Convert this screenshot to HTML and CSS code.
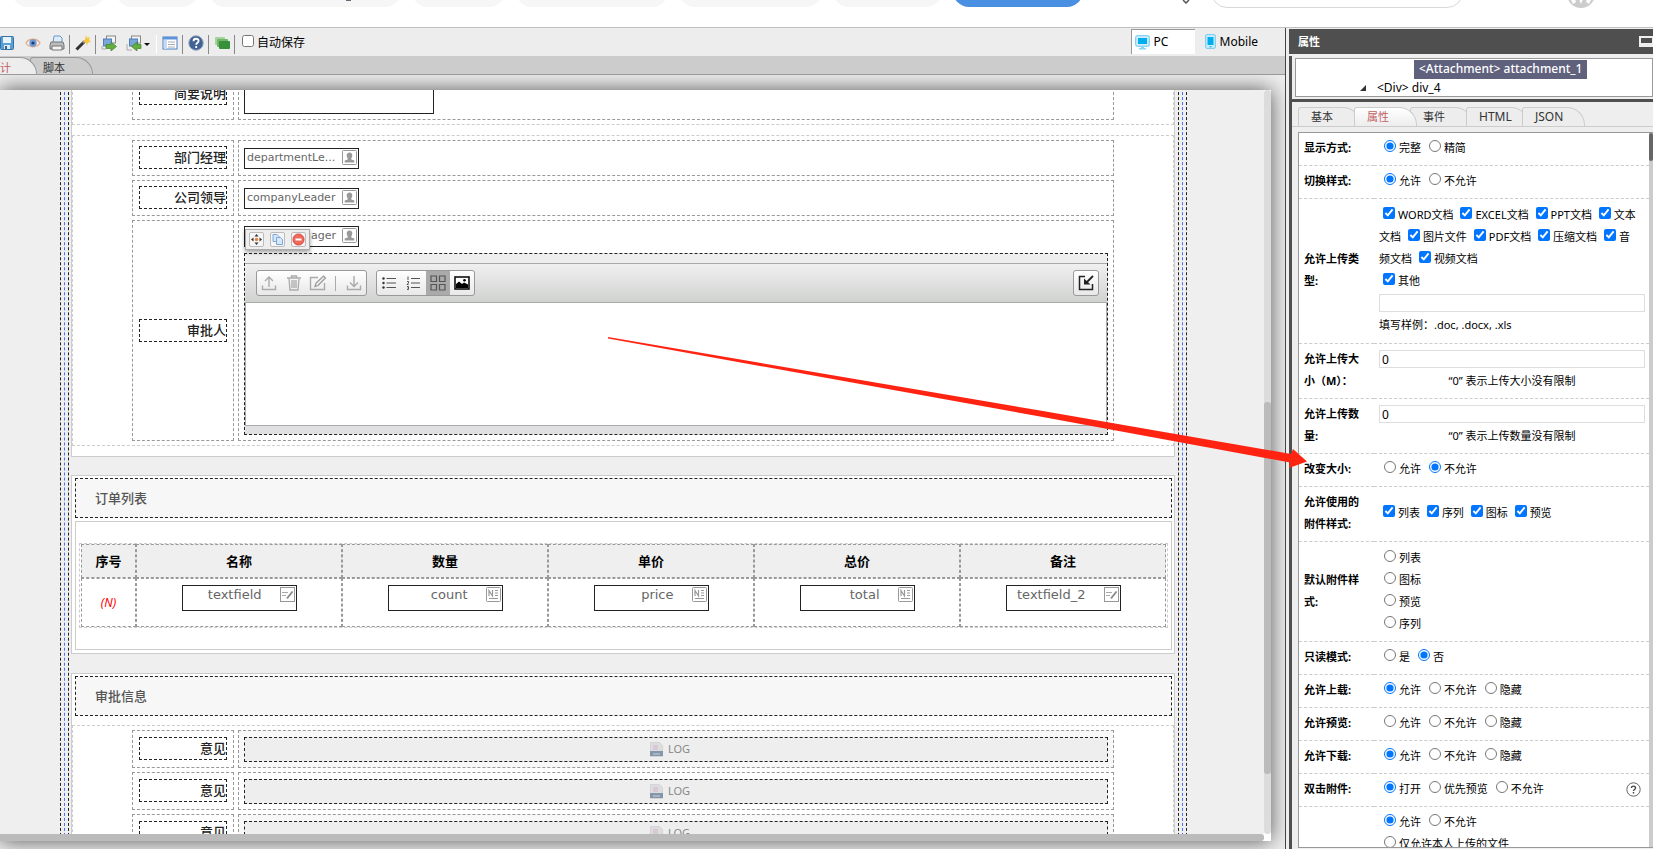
FILE: index.html
```html
<!DOCTYPE html>
<html lang="zh-CN">
<head>
<meta charset="UTF-8" />
<meta name="viewport" content="width=device-width, initial-scale=1" />
<title>表单设计</title>
<link rel="stylesheet" href="styles.css">
</head>
<body>

<!-- Shared icons -->
<svg class="sprite" aria-hidden="true">
  <symbol id="i-person" viewBox="0 0 15 15">
    <rect x=".5" y=".5" width="14" height="14" rx="1" fill="#fff" stroke="#999"/>
    <path d="M7.5 2.5c2 0 3 1.300 2.800 3.200-.1 1.300-.6 2-1 2.500v1.300l3 1v2H2.700v-2l3-1V8.200c-.4-.5-.9-1.200-1-2.500C4.500 3.800 5.500 2.500 7.500 2.500z" fill="#999"/>
  </symbol>
  <symbol id="i-text" viewBox="0 0 15 15">
    <rect x=".5" y=".5" width="14" height="14" fill="#fff" stroke="#999"/>
    <path d="M2 5.500h6M2 8.500h4" stroke="#aaa"/>
    <path d="M7 11.500l5.500-7" stroke="#888" stroke-width="1.800"/>
  </symbol>
  <symbol id="i-num" viewBox="0 0 15 15">
    <rect x=".5" y=".5" width="14" height="14" rx="1" fill="#fff" stroke="#999"/>
    <path d="M3 9V3.500L6.500 9V3M9 3.500h3M9 6h3M9 8.500h3M3 11.500h9" fill="none" stroke="#999" stroke-width="1.200"/>
  </symbol>
  <symbol id="i-log" viewBox="0 0 13 15">
    <path d="M.5.500h9l3 3V14.500H.5z" fill="#ddd" stroke="#d4d4d8"/>
    <path d="M3 3h5v5H3z" fill="#d9c9d6"/>
    <path d="M0 9h13v5H0z" fill="#8496a9"/>
    <path d="M3 12h7" stroke="#c9d3dc"/>
  </symbol>
</svg>

<header class="top">
  <nav class="pills">
    <span class="pill w93"></span><span class="pill w82"></span><span class="pill w192 tail"></span><span class="pill w93"></span><span class="pill w152"></span><span class="pill w143"></span><span class="pill w109"></span><span class="pill w130 on"></span>
  </nav>
  <svg class="chev" width="8" height="4"><path d="M1 0l3 3 3-3" fill="none" stroke="#555" stroke-width="1.500"/></svg>
  <input class="search" type="text" aria-label="搜索">
  <svg class="avatar" width="28" height="28" viewBox="0 0 28 28"><circle cx="14" cy="14" r="14" fill="#ccc"/><path d="M4 20l4-1 1 3-3 2zM24 20l-4-1-1 3 3 2zM12 19h4l-2 5z" fill="#fff"/></svg>
</header>

<div class="main">
  <section class="designer">
    <div class="toolbar">
      <button class="tool save" aria-label="保存"><svg width="15" height="16" viewBox="0 0 15 16"><rect x=".5" y="1.500" width="13" height="13" rx="1" fill="#5a9fd4" stroke="#3572a5"/><path d="M3 2h8v6H3z" fill="#e8f4fc"/><path d="M4 10h6v4H4z" fill="#e5eaf0"/><path d="M5 11h2v3H5z" fill="#2d6594"/></svg></button>
      <button class="tool" aria-label="预览"><svg width="16" height="16" viewBox="0 0 16 16"><path d="M1 8c3-5 11-5 14 0-3 5-11 5-14 0z" fill="#f4f6fa" stroke="#e2ab85" stroke-width="1.400"/><circle cx="8" cy="8" r="3.700" fill="#6c9ad6"/><circle cx="8" cy="8" r="1.600" fill="#223c6a"/></svg></button>
      <button class="tool" aria-label="打印"><svg width="16" height="16" viewBox="0 0 16 16"><path d="M5 1h6l2 2v5H4z" fill="#dcecfb" stroke="#6d97c3"/><path d="M2 7h12l1 3v4H1v-4z" fill="#bbb" stroke="#777"/><path d="M3 11h10v4H3z" fill="#f3f3f3" stroke="#777"/></svg></button>
      <span class="sep"></span>
      <button class="tool" aria-label="向导"><svg width="16" height="16" viewBox="0 0 16 16"><path d="M1.500 14.500L9 7" stroke="#333" stroke-width="3"/><path d="M8 8l2-2" stroke="#888" stroke-width="3"/><path d="M11 0l1 3 3-1-1 3 2 2-3 .5-1 3-1-3-3-1 2-2z" fill="#f8c63c"/></svg></button>
      <span class="sep"></span>
      <button class="tool" aria-label="导出"><svg width="16" height="16" viewBox="0 0 16 16"><rect x="5.500" y="1" width="9" height="7" fill="#f4f4f4" stroke="#888"/><rect x="2.500" y="4" width="8" height="7" fill="#79a7dc" stroke="#4f7fb8"/><path d="M1 11v3h4" fill="none" stroke="#aaa"/><path d="M5 9.500h5V7l5.500 4.500L10 16v-2.500H5z" fill="#63ae3e" stroke="#40842a" stroke-width=".7"/></svg></button>
      <button class="tool wide" aria-label="导入"><svg width="25" height="16" viewBox="0 0 25 16"><rect x="5.500" y="1" width="9" height="7" fill="#f4f4f4" stroke="#888"/><rect x="3.500" y="4" width="8" height="7" fill="#79a7dc" stroke="#4f7fb8"/><path d="M1 9v6h5" fill="none" stroke="#aaa"/><path d="M15 9.500h-4V7l-5.500 4.500L11 16v-2.500h4z" fill="#63ae3e" stroke="#40842a" stroke-width=".7"/><path d="M18 8h6l-3 3z" fill="#111"/></svg></button>
      <span class="sep light"></span>
      <button class="tool" aria-label="列表"><svg width="16" height="16" viewBox="0 0 16 16"><rect x="1" y="2" width="14" height="12" fill="#fff" stroke="#4a7fc4"/><path d="M1 2h14v2.500H1z" fill="#5b93dc"/><path d="M2 5h3v9H2z" fill="#c6dbf3"/><path d="M6 7h7M6 9.500h7M6 12h7" stroke="#aab"/></svg></button>
      <span class="sep"></span>
      <button class="tool" aria-label="帮助"><svg width="16" height="16" viewBox="0 0 16 16"><circle cx="8" cy="8" r="7.200" fill="#426293" stroke="#8ba0bf"/><path d="M5.500 6.200C5.500 2.900 10.700 3 10.600 6c0 1.800-2.400 1.800-2.400 3.700M8.200 11v2" fill="none" stroke="#fff" stroke-width="1.800"/></svg></button>
      <span class="sep"></span>
      <button class="tool" aria-label="多语言"><svg width="16" height="16" viewBox="0 0 16 16"><rect x="1" y="2" width="10" height="8" rx="1" fill="#a5d49b"/><rect x="3" y="4" width="11" height="8" rx="1" fill="#6fb667"/><rect x="5" y="6" width="11" height="8" rx="1" fill="#37913a"/></svg></button>
      <span class="sep"></span>
      <label class="autosave"><input type="checkbox">自动保存</label>
      <div class="modes">
        <button class="mode on"><svg width="15" height="15" viewBox="0 0 15 15"><rect x=".7" y=".7" width="13.600" height="10.600" rx="1.500" fill="#cdeefd" stroke="#6dc7ee"/><path d="M3 3h9v6H3z" fill="#00aeef"/><path d="M6 11h3v2h2v1.500H4V13h2z" fill="#8fd5f3"/></svg>PC</button>
        <button class="mode"><svg width="11" height="15" viewBox="0 0 11 15"><rect x=".7" y=".7" width="9.600" height="13.600" rx="1" fill="#cdeefd" stroke="#6dc7ee"/><path d="M2.500 3h6v8h-6z" fill="#00aeef"/><path d="M4.500 12.700h2" stroke="#00aeef"/></svg>Mobile</button>
      </div>
    </div>
    <div class="tabs view-tabs">
      <button class="tab on" aria-label="设计">计</button>
      <button class="tab">脚本</button>
    </div>

    <div class="stage">
      <div class="frame">
        <div class="viewport">
          <div class="guide dark"><div class="guide blue"><div class="guide dark inner">

            <div class="card first">
              <div class="grid-box">
                <div class="row">
                  <div class="cell name"><div class="caption">简要说明</div></div>
                  <div class="cell"><div class="field tall"><span></span><svg><use href="#i-text"/></svg></div></div>
                </div>
              </div>
              <div class="grid-box">
                <div class="row">
                  <div class="cell name"><div class="caption">部门经理</div></div>
                  <div class="cell"><div class="field"><span>departmentLe...</span><svg><use href="#i-person"/></svg></div></div>
                </div>
                <div class="row">
                  <div class="cell name"><div class="caption">公司领导</div></div>
                  <div class="cell"><div class="field"><span>companyLeader</span><svg><use href="#i-person"/></svg></div></div>
                </div>
                <div class="row">
                  <div class="cell name"><div class="caption">审批人</div></div>
                  <div class="cell">
                    <div class="field picked"><span class="end">ager</span><svg><use href="#i-person"/></svg>
                      <div class="float-tools">
                        <button aria-label="移动"><svg width="13" height="13" viewBox="0 0 13 13"><path d="M6.500 1l2 2.500h-4zM6.500 12l2-2.500h-4zM1 6.500l2.500-2v4zM12 6.500l-2.500-2v4z" fill="#333"/><circle cx="6.500" cy="6.500" r="1.700" fill="#f08030"/></svg></button>
                        <button aria-label="复制"><svg width="13" height="13" viewBox="0 0 13 13"><path d="M2 1.500h4l2 2v5H2z" fill="#d6e7fa" stroke="#7da7da"/><path d="M5.500 4.500h4l2 2v5h-6z" fill="#d6e7fa" stroke="#7da7da"/></svg></button>
                        <button aria-label="删除"><svg width="13" height="13" viewBox="0 0 13 13"><circle cx="6.500" cy="6.500" r="5.500" fill="#ee6a5c" stroke="#d8453b"/><path d="M3.500 6.500h6" stroke="#fff" stroke-width="2"/></svg></button>
                      </div>
                    </div>
                    <div class="attach">
                      <div class="attach-bar">
                        <div class="group">
                          <button aria-label="上传"><svg width="16" height="16" viewBox="0 0 16 16"><path d="M1.500 10.500v4h13v-4M8 12V2M4 6l4-4 4 4" fill="none" stroke="#aaa" stroke-width="1.400"/></svg></button>
                          <button aria-label="删除附件"><svg width="16" height="16" viewBox="0 0 16 16"><path d="M1 3h14M5.500 3V1h5v2M3 4l1 11h8l1-11M6 5v8M8 5v8M10 5v8" fill="none" stroke="#aaa" stroke-width="1.300"/></svg></button>
                          <button aria-label="替换"><svg width="18" height="16" viewBox="0 0 18 16"><path d="M9 2.500H1.500v12h14V8" fill="none" stroke="#aaa" stroke-width="1.400"/><path d="M6 11.500l1-3.500 7.500-7 2 2L9 10.500z" fill="#eee" stroke="#999" stroke-width="1.200"/></svg></button>
                          <i></i>
                          <button aria-label="下载"><svg width="16" height="16" viewBox="0 0 16 16"><path d="M1.500 10.500v4h13v-4M8 1v10M4 7.500l4 4 4-4" fill="none" stroke="#aaa" stroke-width="1.400"/></svg></button>
                        </div>
                        <div class="group styles">
                          <button aria-label="列表"><svg width="14" height="14" viewBox="0 0 14 14"><path d="M4.500 2.500H14M4.500 7H14M4.500 11.500H14" stroke="#555" stroke-width="1.200"/><circle cx="1.500" cy="2.500" r="1.200" fill="#333"/><circle cx="1.500" cy="7" r="1.200" fill="#333"/><circle cx="1.500" cy="11.500" r="1.200" fill="#333"/></svg></button>
                          <button aria-label="序列"><svg width="14" height="14" viewBox="0 0 14 14"><path d="M5 2.500h9M5 7h9M5 11.500h9M2 .5v3.500M1 5.500h1.500V7L1 8.500h1.500M1 10.500h1.500v3H1M1.500 12H2.500" fill="none" stroke="#555"/></svg></button>
                          <button class="on" aria-label="图标"><svg width="16" height="16" viewBox="0 0 16 16"><path d="M1 1h5.500v5.500H1zM9.500 1H15v5.500H9.500zM1 9.500h5.500V15H1zM9.500 9.500H15V15H9.500z" fill="none" stroke="#555" stroke-width="1.200"/></svg></button>
                          <button aria-label="预览"><svg width="16" height="14" viewBox="0 0 16 14"><rect x="1" y="1" width="14" height="12" fill="#fff" stroke="#111" stroke-width="1.600"/><path d="M2 12V8l3-2.500L8 8l2-1.500L14 8.500V12z" fill="#000"/><circle cx="10.500" cy="4.200" r="1.300"/></svg></button>
                        </div>
                        <button class="expand" aria-label="收起"><svg width="16" height="16" viewBox="0 0 16 16"><path d="M7 1.500H1.500v13h13V9" fill="none" stroke="#222" stroke-width="1.500"/><path d="M15 1L8.500 7.500" stroke="#222" stroke-width="1.800"/><path d="M6 3.500V9.500H12.500z" fill="#222"/></svg></button>
                      </div>
                      <div class="attach-body"></div>
                      <div class="attach-foot"></div>
                    </div>
                  </div>
                </div>
              </div>
            </div>

            <div class="card">
              <h2 class="card-title">订单列表</h2>
              <div class="list-box">
                <div class="list-wrap">
                  <table class="orders">
                    <thead>
                      <tr><th class="no">序号</th><th>名称</th><th>数量</th><th>单价</th><th>总价</th><th>备注</th></tr>
                    </thead>
                    <tbody>
                      <tr>
                        <td class="no">(N)</td>
                        <td><div class="field big"><span>textfield</span><svg><use href="#i-text"/></svg></div></td>
                        <td><div class="field big"><span>count</span><svg><use href="#i-num"/></svg></div></td>
                        <td><div class="field big"><span>price</span><svg><use href="#i-num"/></svg></div></td>
                        <td><div class="field big"><span>total</span><svg><use href="#i-num"/></svg></div></td>
                        <td><div class="field big"><span>textfield_2</span><svg><use href="#i-text"/></svg></div></td>
                      </tr>
                    </tbody>
                  </table>
                </div>
              </div>
            </div>

            <div class="card">
              <h2 class="card-title">审批信息</h2>
              <div class="grid-box opinions">
                <div class="row">
                  <div class="cell name"><div class="caption">意见</div></div>
                  <div class="cell tint"><div class="log"><svg><use href="#i-log"/></svg>LOG</div></div>
                </div>
                <div class="row">
                  <div class="cell name"><div class="caption">意见</div></div>
                  <div class="cell"><div class="log"><svg><use href="#i-log"/></svg>LOG</div></div>
                </div>
                <div class="row">
                  <div class="cell name"><div class="caption">意见</div></div>
                  <div class="cell tint"><div class="log"><svg><use href="#i-log"/></svg>LOG</div></div>
                </div>
              </div>
            </div>

          </div></div></div>
        </div>
        <div class="vbar"><div class="thumb"></div></div>
        <div class="hbar"></div>
      </div>
    </div>
  </section>

  <aside class="side">
    <div class="side-head">属性<svg width="14" height="11" viewBox="0 0 14 11"><rect width="14" height="11" fill="#eee"/><rect x="2" y="2" width="11" height="5" fill="#4f4f4f"/></svg></div>
    <div class="side-body">
      <div class="tree">
        <div class="node sel">&lt;Attachment&gt; attachment_1</div>
        <div class="node child"><svg width="6" height="6"><path d="M6 0v6H0z" fill="#333"/></svg>&lt;Div&gt; div_4</div>
      </div>
      <div class="tabs prop-tabs">
        <button class="tab">基本</button>
        <button class="tab on">属性</button>
        <button class="tab">事件</button>
        <button class="tab latin">HTML</button>
        <button class="tab latin">JSON</button>
      </div>
      <div class="props-box">
        <table class="props">
          <tr><th>显示方式:</th><td><label><input type="radio" name="show" checked>完整</label> <label><input type="radio" name="show">精简</label></td></tr>
          <tr><th>切换样式:</th><td><label><input type="radio" name="switch" checked>允许</label> <label><input type="radio" name="switch">不允许</label></td></tr>
          <tr class="l6"><th>允许上传类型:</th><td><label><input type="checkbox" checked>WORD文档</label> <label><input type="checkbox" checked>EXCEL文档</label> <label><input type="checkbox" checked>PPT文档</label> <label><input type="checkbox" checked>文本<br>文档</label> <label><input type="checkbox" checked>图片文件</label> <label><input type="checkbox" checked>PDF文档</label> <label><input type="checkbox" checked>压缩文档</label> <label><input type="checkbox" checked>音<br>频文档</label> <label><input type="checkbox" checked>视频文档</label><br><label><input type="checkbox" checked>其他</label><input class="text" type="text" aria-label="其他类型">填写样例：.doc, .docx, .xls</td></tr>
          <tr class="l2"><th><label for="max-size">允许上传大小（M）：</label></th><td><input class="text" id="max-size" type="text" value="0"><p>“0” 表示上传大小没有限制</p></td></tr>
          <tr class="l2"><th><label for="max-count">允许上传数量:</label></th><td><input class="text" id="max-count" type="text" value="0"><p>“0” 表示上传数量没有限制</p></td></tr>
          <tr><th>改变大小:</th><td><label><input type="radio" name="resize">允许</label> <label><input type="radio" name="resize" checked>不允许</label></td></tr>
          <tr class="l2"><th>允许使用的附件样式:</th><td><label><input type="checkbox" checked>列表</label> <label><input type="checkbox" checked>序列</label> <label><input type="checkbox" checked>图标</label> <label><input type="checkbox" checked>预览</label></td></tr>
          <tr class="l4"><th>默认附件样式:</th><td><label><input type="radio" name="style">列表</label><br><label><input type="radio" name="style">图标</label><br><label><input type="radio" name="style">预览</label><br><label><input type="radio" name="style">序列</label></td></tr>
          <tr><th>只读模式:</th><td><label><input type="radio" name="ro">是</label> <label><input type="radio" name="ro" checked>否</label></td></tr>
          <tr><th>允许上载:</th><td><label><input type="radio" name="up" checked>允许</label> <label><input type="radio" name="up">不允许</label> <label><input type="radio" name="up">隐藏</label></td></tr>
          <tr><th>允许预览:</th><td><label><input type="radio" name="pre">允许</label> <label><input type="radio" name="pre">不允许</label> <label><input type="radio" name="pre">隐藏</label></td></tr>
          <tr><th>允许下载:</th><td><label><input type="radio" name="down" checked>允许</label> <label><input type="radio" name="down">不允许</label> <label><input type="radio" name="down">隐藏</label></td></tr>
          <tr><th>双击附件:</th><td><div class="with-help"><span><label><input type="radio" name="dbl" checked>打开</label> <label><input type="radio" name="dbl">优先预览</label> <label><input type="radio" name="dbl">不允许</label></span><button class="help" aria-label="说明"><svg width="15" height="15" viewBox="0 0 15 15"><circle cx="7.500" cy="7.500" r="6.700" fill="#fff" stroke="#666"/><path d="M5.500 6c0-2.600 4-2.500 4 0 0 1.500-2 1.400-2 3M7.500 10v1.500" fill="none" stroke="#444" stroke-width="1.400"/></svg></button></div></td></tr>
          <tr class="last"><th></th><td><label><input type="radio" name="del" checked>允许</label> <label><input type="radio" name="del">不允许</label><br><label><input type="radio" name="del">仅允许本人上传的文件</label></td></tr>
        </table>
        <div class="props-bar"><div class="thumb"></div></div>
      </div>
    </div>
  </aside>
</div>

<!-- Pointer from the attachment field to its size property -->
<svg class="pointer" width="700" height="132" viewBox="0 0 700 132" aria-hidden="true"><path d="M0 0L432 73.500 683 117 685 112 699 124.500 681 131 682 125.500 432 79.500 0 1.500z" fill="#ff2412"/></svg>

</body>
</html>
```
FILE: styles.css
```css
* {
  box-sizing: border-box;
}
body {
  margin: 0;
  height: 100vh;
  display: flex;
  flex-direction: column;
  overflow: hidden;
  position: relative;
  background: #fff;
  color: #000;
  font: 11px/22px "Noto Sans", "Noto Sans CJK SC", sans-serif;
}
button {
  padding: 0;
  border: 0;
  background: none;
  font: inherit;
  color: inherit;
}
svg {
  display: block;
  flex: none;
}
.sprite {
  position: absolute;
  width: 0;
  height: 0;
}

/* Top strip */
.top {
  flex: none;
  height: 28px;
  display: flex;
  align-items: flex-start;
  overflow: hidden;
  border-bottom: 1px solid #c0c0c0;
}
.pills {
  display: flex;
  gap: 11px;
  margin-left: 12px;
}
.pill {
  height: 32px;
  margin-top: -25px;
  border-radius: 16px;
  background: #f6f6f6;
}
.pill.on { background: #4a90e2; }
.pill.tail::after {
  content: "";
  display: block;
  width: 5px;
  height: 1px;
  margin: 25px 0 0 137px;
  background: #667;
}
.w82 { width: 82px; }
.w93 { width: 93px; }
.w109 { width: 109px; }
.w130 { width: 130px; }
.w143 { width: 143px; }
.w152 { width: 152px; }
.w192 { width: 192px; }
.chev { margin-left: 99px; }
.search {
  width: 252px;
  height: 32px;
  margin: -24px 0 0 21px;
  border: 1px solid #d8d8d8;
  border-radius: 16px;
}
.avatar {
  margin: -20px 0 0 104px;
}

.main {
  flex: 1;
  min-height: 0;
  display: flex;
}
.designer {
  flex: 1;
  min-width: 0;
  display: flex;
  flex-direction: column;
}

/* Toolbar */
.toolbar {
  flex: none;
  height: 28px;
  display: flex;
  align-items: center;
  padding-top: 2px;
  background: #ededed;
}
.tool {
  width: 24px;
  display: flex;
  justify-content: center;
}
.tool.save {
  width: 21px;
  justify-content: flex-start;
}
.tool.wide { width: 35px; }
.sep {
  width: 1px;
  height: 19px;
  margin: 2px 1px 0 0;
  background: #888;
}
.sep.light { background: #fff; }
.autosave {
  display: flex;
  align-items: center;
  margin-left: 6px;
  font-size: 12px;
}
.autosave input {
  width: 12px;
  height: 12px;
  margin: 0 3px 4px 0;
}
.modes {
  display: flex;
  margin: 0 0 3px auto;
  padding-right: 23px;
}
.mode {
  display: flex;
  align-items: center;
  gap: 4px;
  height: 25px;
  font-size: 12px;
  padding: 0 4px 0 10px;
}
.mode.on {
  width: 64px;
  padding: 0 4px 0 3px;
  background: #fff;
  border: 1px solid #999;
  border-width: 1px 0 0 1px;
}

/* Tabs */
.tabs {
  flex: none;
  display: flex;
  align-items: flex-end;
}
.tab {
  position: relative;
  width: 63px;
  height: 19px;
  margin-right: -7px;
  padding-left: 12px;
  line-height: 16px;
  text-align: left;
  color: #333;
  background: #ededed;
  border: 1px solid #ccc;
  border-bottom: 0;
  border-radius: 3px 18px 0 0;
}
.tab.on {
  z-index: 1;
  color: #c0605f;
  background: linear-gradient(#fff, #ededed);
}
.tab.latin { font-size: 12px; }
.view-tabs {
  height: 19px;
  background: #ccc;
  border-bottom: 1px solid #999;
}
.view-tabs .tab {
  height: 17px;
  line-height: 19px;
  background: #ccc;
  border-color: #999;
}
.view-tabs .tab.on {
  width: 37px;
  padding: 0;
  border-left: 0;
  border-top-left-radius: 0;
  background: #ededed;
}

/* Canvas */
.stage {
  flex: 1;
  min-height: 0;
  display: flex;
  padding: 15px 14px 8px 0;
  overflow: hidden;
  background: #eee;
}
.frame {
  flex: 1;
  min-width: 0;
  display: grid;
  grid-template: minmax(0, 1fr) 7px / minmax(0, 1fr) 7px;
  background: #fff;
  box-shadow: 0 0 20px #555;
}
.viewport {
  overflow: hidden;
  background: #efefef;
}
.vbar { background: #dcdcdc; border-radius: 3px; }
.vbar .thumb {
  height: 50%;
  border-radius: 3px;
  background: #bbb;
  position: relative;
  top: 42%;
}
.hbar {
  background: #bbb;
  border-radius: 0 3px 3px 0;
}
.guide {
  padding: 0 3px;
  border: 1px dashed #222;
  border-width: 0 1px;
}
.guide.blue { border-color: #4a6fff; }
.guide.inner { padding: 0 3px 0 2px; }
.viewport > .guide {
  margin: -28px 77px 0 60px;
}

.card {
  margin-bottom: 19px;
  padding: 2px 2px 3px 3px;
  background: #fff;
  border: 1px solid #ccc;
}
.card.first {
  margin-bottom: 18px;
  padding: 0 0 10px;
  border-top: 0;
}
.card.first .grid-box + .grid-box { margin-top: 10px; }
.grid-box {
  display: flex;
  flex-direction: column;
  gap: 4px;
  padding: 4px 59px;
  border: 1px dashed #ccc;
}
.row {
  display: flex;
  gap: 4px;
}
.cell {
  flex: 1;
  min-width: 0;
  min-height: 36px;
  padding: 5px;
  display: flex;
  flex-direction: column;
  justify-content: center;
  gap: 6px;
  border: 1px dashed #999;
}
.cell.name {
  flex: 0 0 102px;
  padding: 0 6px 1px;
}
.cell.tint { background: #f8f8f8; }
.caption {
  height: 23px;
  border: 1px dashed #222;
  font-size: 13px;
  line-height: 20px;
  font-weight: 500;
  text-align: right;
  white-space: nowrap;
  color: #222;
}
.field {
  position: relative;
  width: 115px;
  height: 21px;
  padding: 1px 1px 0 2px;
  display: flex;
  justify-content: space-between;
  background: #fff;
  border: 1px solid #222;
  font: 11px/15px "DejaVu Sans", sans-serif;
  color: #666;
}
.field > svg {
  width: 15px;
  height: 15px;
}
.field.tall {
  width: 190px;
  height: 41px;
}
.field .end {
  flex: 1;
  padding-right: 6px;
  text-align: right;
}
.field.big {
  height: 26px;
  margin: 0 auto;
  font-size: 13px;
}
.field.big span {
  flex: 1;
  padding-right: 18px;
  text-align: right;
}

/* Tools of the selected component */
.float-tools {
  position: absolute;
  z-index: 1;
  left: 0;
  top: 2px;
  width: 65px;
  height: 21px;
  padding: 0 3px;
  display: flex;
  align-items: center;
  justify-content: space-between;
  background: #eee;
  border: 1px solid #aaa;
  box-shadow: 0 2px 4px rgba(0,0,0,0.4);
}
.float-tools button {
  width: 15px;
  height: 15px;
  background: #f6f6f6;
  border: 1px solid #bbb;
  border-radius: 2px;
}

/* Attachment component */
.attach {
  padding-top: 9px;
  background: #eee;
  border: 1px dashed #222;
}
.attach-bar {
  height: 39px;
  padding: 0 8px 0 11px;
  display: flex;
  align-items: center;
  gap: 9px;
  background: linear-gradient(#f0f0f0, #d0d2d0);
  border-top: 1px solid #aaa;
}
.group {
  display: flex;
  align-items: center;
  width: 111px;
  height: 26px;
  background: linear-gradient(#fff, #e8e8e8);
  border: 1px solid #999;
  border-radius: 3px;
}
.group button {
  flex: 1;
  height: 24px;
  display: flex;
  align-items: center;
  justify-content: center;
}
.group i {
  width: 1px;
  height: 15px;
  margin: 0 6px 0 4px;
  background: #aaa;
}
.group.styles { width: 99px; }
.group .on { background: #aaa; }
.expand {
  width: 26px;
  height: 26px;
  margin-left: auto;
  display: flex;
  align-items: center;
  justify-content: center;
  background: linear-gradient(#fff, #e8e8e8);
  border: 1px solid #999;
  border-radius: 3px;
}
.attach-body {
  height: 124px;
  background: #fff;
  border: 1px solid #aaa;
}
.attach-foot {
  height: 8px;
  background: #e0e0e2;
}

/* Order list */
.card-title {
  height: 40px;
  margin: 0;
  padding-left: 19px;
  background: #f7f7f7;
  border: 1px dashed #222;
  font-size: 13px;
  line-height: 38px;
  font-weight: 500;
  color: #555;
}
.list-box {
  margin-top: 3px;
  padding: 21px 3px;
  border: 1px solid #ccc;
}
.list-wrap {
  padding: 0 1px;
  border: 1px dashed #ccc;
}
.orders {
  width: 100%;
  table-layout: fixed;
  border-collapse: separate;
  border-spacing: 0;
}
.orders th,
.orders td {
  padding: 0;
  border: 1px dashed #999;
}
.orders th {
  height: 34px;
  background: #efefef;
  font-size: 13px;
}
.orders td {
  height: 49px;
  padding-top: 6px;
  vertical-align: top;
}
.orders .no { width: 55px; }
.orders td.no {
  padding: 0;
  vertical-align: middle;
  text-align: center;
  font-size: 12px;
  font-style: italic;
  color: #f00;
}

/* Opinions */
.opinions {
  margin: 9px -2px 0 -3px;
}
.opinions .cell { height: 38px; }
.log {
  height: 25px;
  padding-right: 12px;
  display: flex;
  align-items: center;
  justify-content: center;
  gap: 5px;
  background: #eee;
  border: 1px dashed #222;
  color: #888;
}
.log svg {
  width: 13px;
  height: 15px;
}

/* Side panel */
.side {
  flex: none;
  width: 368px;
  display: flex;
  flex-direction: column;
  padding: 1px 0 0 3px;
  background: #eee;
  border-left: 1px solid #444;
}
.side-head {
  flex: none;
  height: 25px;
  padding-left: 9px;
  display: flex;
  align-items: center;
  justify-content: space-between;
  background: #4f4f4f;
  color: #fff;
  font-weight: 700;
}
.side-body {
  flex: 1;
  min-height: 0;
  margin-top: 2px;
  padding-top: 2px;
  display: flex;
  flex-direction: column;
  border-left: 3px solid #4f4f4f;
}
.tree {
  flex: none;
  height: 39px;
  margin: 0 0 2px 3px;
  padding-top: 1px;
  background: #fff;
  border: 1px solid #999;
  font-size: 12px;
}
.node {
  width: max-content;
  height: 19px;
  line-height: 18px;
}
.node.sel {
  margin-left: 118px;
  padding: 0 5px;
  background: #5f617d;
  color: #fff;
  font-weight: 500;
}
.node.child {
  height: 17px;
  margin-left: 64px;
  display: flex;
  align-items: center;
  gap: 11px;
}
.prop-tabs {
  height: 28px;
  padding-left: 6px;
  border-top: 3px solid #4f4f4f;
  border-bottom: 1px solid #ccc;
}
.props-box {
  flex: 1;
  min-height: 0;
  margin: 5px 0 1px 6px;
  display: flex;
  align-items: flex-start;
  overflow: hidden;
  background: #fff;
  border: 1px solid #999;
  border-right: 0;
}
.props {
  flex: 1;
  table-layout: fixed;
  width: 350px;
  border-collapse: separate;
  border-spacing: 0;
}
.props th,
.props td {
  height: 33px;
  padding: 4px 4px 6px 5px;
  border-bottom: 1px dashed #ccc;
  text-align: left;
}
.props th {
  width: 75px;
  padding-right: 12px;
}
.props td { white-space: nowrap; }
.props .l2 th { height: 55px; }
.props .l4 th { height: 100px; }
.props .l6 th { height: 145px; }
.props .last td {
  vertical-align: top;
}
.props input[type="radio"],
.props input[type="checkbox"] {
  width: 12px;
  height: 12px;
  margin: 0 3px 0 5px;
  vertical-align: 0;
}
.props input[type="checkbox"] { margin-left: 4px; }
.props .text {
  display: block;
  width: 100%;
  height: 18px;
  margin: 2px 0;
  padding: 0 2px;
  border: 1px solid #ddd;
  font: 12px "Noto Sans", sans-serif;
}
.props p {
  margin: 0;
  text-align: center;
}
.with-help {
  display: flex;
  justify-content: space-between;
  align-items: center;
  padding-right: 4px;
}
.props-bar {
  align-self: stretch;
  width: 4px;
  background: #ccc;
}
.props-bar .thumb {
  height: 28px;
  border-radius: 2px;
  background: #666;
}

.pointer {
  position: absolute;
  z-index: 5;
  left: 608px;
  top: 337px;
  pointer-events: none;
}
```
